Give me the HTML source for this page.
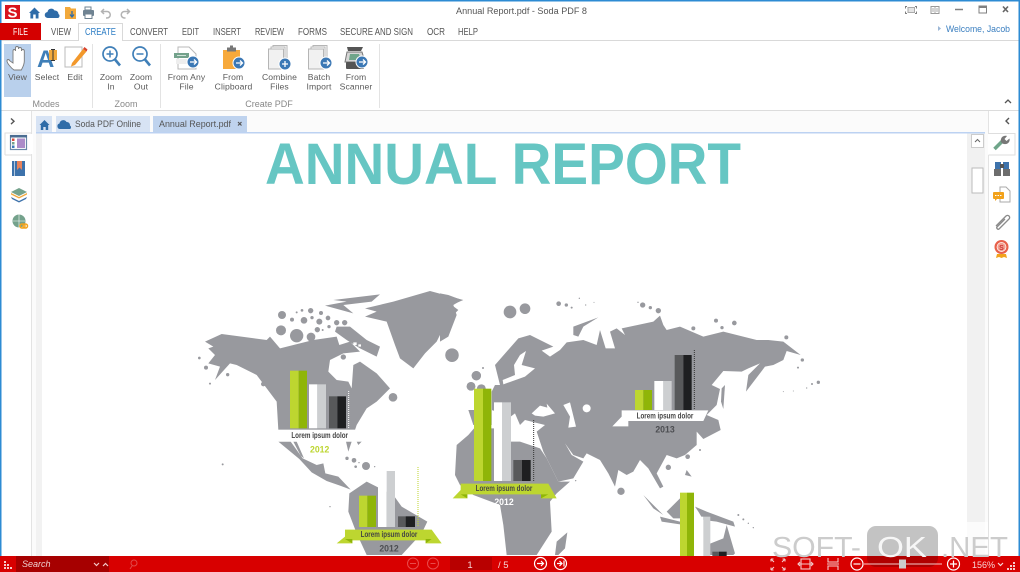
<!DOCTYPE html>
<html><head><meta charset="utf-8"><style>
html,body{margin:0;padding:0;background:#fff;width:1020px;height:572px;overflow:hidden}
svg{display:block;font-family:"Liberation Sans",sans-serif;filter:blur(.35px)}
.t{font-size:8.6px;fill:#5a5a5a;text-anchor:middle;letter-spacing:.1px}
.m{font-size:10px;fill:#555}
.g{font-size:9px;fill:#888;text-anchor:middle}
.l{font-family:"Liberation Sans",sans-serif;font-weight:bold;font-size:25px;text-anchor:middle}
</style></head><body>
<svg width="1020" height="572" viewBox="0 0 1020 572" xmlns="http://www.w3.org/2000/svg">
<rect width="1020" height="572" fill="#fff"/>
<!-- document -->
<rect x="32" y="111" width="956" height="445" fill="#fbfbfb"/>
<rect x="36" y="133" width="6" height="423" fill="#f2f2f2"/>
<rect x="42" y="133" width="925" height="423" fill="#fff"/>
<rect x="967" y="133" width="18" height="423" fill="#f1f1f1"/>
<text x="265" y="184" font-size="58" font-weight="bold" fill="#66c6c3" textLength="476" lengthAdjust="spacingAndGlyphs">ANNUAL REPORT</text>

<!-- Map Americas -->
<g transform="translate(180,285) scale(.33333)" fill="#98999e">
<path d="M555 70L640 50 750 18 850 45 815 60 835 75 800 110 770 170 735 205 700 250 660 220 645 180 620 110 555 95 590 80Z"/>
<path d="M460 45L600 28 575 50 490 60 520 85 435 62 500 50Z"/>
<path d="M470 125L510 125 560 165 600 185 590 215 540 190 500 165 465 140Z"/>
<path d="M75 170L125 147 260 165 270 155 300 190 400 165 470 155 478 180 510 170 540 200 490 205 450 225 445 260 470 285 505 290 515 310 520 240 540 230 590 265 630 310 600 340 590 350 560 370 530 420 525 435 295 435 290 350 230 270 170 240 150 235 105 285 120 245 85 235 105 210 85 190 100 185Z"/>
<path d="M295 470L332 470 368 520 410 540 430 535 436 565 475 575 512 614 480 602 440 588 395 562 358 522Z"/>
<path d="M340 470L350 470 372 520 362 512ZM498 470L515 470 505 500ZM530 470L545 470 535 480Z"/>
<path d="M508 625L560 590 640 630 665 665 742 710 725 745 665 810 560 810 530 745 505 680Z"/>
<circle cx="306" cy="90" r="12"/><circle cx="303" cy="136" r="15"/><circle cx="350" cy="152" r="20"/><circle cx="393" cy="156" r="13"/><circle cx="372" cy="106" r="10"/><circle cx="392" cy="77" r="8"/><circle cx="418" cy="110" r="9"/><circle cx="336" cy="104" r="6"/><circle cx="350" cy="82" r="3"/><circle cx="366" cy="76" r="4"/><circle cx="396" cy="98" r="5"/><circle cx="423" cy="84" r="6"/><circle cx="444" cy="99" r="7"/><circle cx="470" cy="113" r="8"/><circle cx="494" cy="113" r="8"/><circle cx="412" cy="134" r="8"/><circle cx="447" cy="125" r="5"/><circle cx="428" cy="135" r="3"/>
<circle cx="816" cy="210" r="20"/><circle cx="639" cy="337" r="13"/><circle cx="250" cy="297" r="7"/><circle cx="143" cy="269" r="5"/><circle cx="90" cy="296" r="3"/><circle cx="78" cy="248" r="6"/><circle cx="58" cy="219" r="4"/><circle cx="128" cy="538" r="3"/><circle cx="450" cy="665" r="2"/><circle cx="490" cy="216" r="8"/>
<circle cx="558" cy="543" r="12"/><circle cx="522" cy="526" r="7"/><circle cx="501" cy="520" r="5"/><circle cx="527" cy="545" r="4"/><circle cx="537" cy="533" r="2"/><circle cx="584" cy="545" r="2"/>
<circle cx="889" cy="272" r="14"/><circle cx="873" cy="304" r="13"/><circle cx="904" cy="311" r="13"/><circle cx="909" cy="249" r="3"/>
<path d="M520 172h10v8h-10zM535 178h8v7h-8z" fill="#fff"/>
</g>
<!-- Map Eurasia -->
<g transform="translate(440,285) scale(.33333)" fill="#98999e">
<path d="M0 25L25 30 65 45 40 60 50 90 25 155 0 170Z"/>
<path d="M165 300L180 300 165 240 235 160 270 150 300 165 340 185 305 197 330 215 360 195 380 172 430 165 470 180 480 135 497 190 525 190 510 140 530 130 555 150 545 130 640 110 660 92 670 120 680 135 720 125 790 155 850 140 950 165 985 165 1030 170 1082 210 1040 198 1030 225 1000 240 975 245 918 320 925 270 960 235 925 250 905 260 850 258 815 300 840 312 830 360 800 390 835 405 842 435 790 462 770 440 770 480 735 510 710 520 680 510 650 565 670 605 660 610 625 550 600 525 580 560 560 570 535 555 525 605 505 565 480 525 440 505 430 520 400 510 375 475 395 510 430 530 400 580 355 590 310 500 290 440 315 420 255 405 240 420 225 385 212 395 155 375 155 320Z"/>
<path d="M400 125L475 97 430 125 415 155 400 150Z"/>
<path d="M845 310L855 300 850 372 843 350Z"/>
<path d="M85 375H155V420H100Z"/>
<path d="M50 480L85 450 102 430H213V470H240L300 490 320 520 355 590 390 590 350 625 330 650 335 740 290 810 200 810 190 720 180 660 100 630 60 600 45 570Z"/>
<path d="M610 630L670 690 640 670ZM680 680L720 640 735 645 730 700 700 700ZM660 695L720 710 720 718 665 710ZM765 665L800 680 880 710 885 725 830 710 790 705 775 680ZM740 555L755 575 735 570Z"/>
<path d="M350 770L382 742 375 790 355 810 345 810Z"/>
<path d="M860 720L885 805 880 810 790 810 800 780 850 760Z"/>
<circle cx="210" cy="81" r="19"/><circle cx="255" cy="71" r="16"/><circle cx="36" cy="211" r="20"/><circle cx="109" cy="272" r="14"/><circle cx="93" cy="304" r="13"/><circle cx="124" cy="311" r="13"/>
<circle cx="356" cy="56" r="7"/><circle cx="379" cy="60" r="5"/><circle cx="395" cy="68" r="3"/><circle cx="418" cy="40" r="2"/><circle cx="437" cy="60" r="2"/><circle cx="462" cy="52" r="1.500"/>
<circle cx="608" cy="60" r="8"/><circle cx="631" cy="68" r="5"/><circle cx="655" cy="77" r="8"/><circle cx="594" cy="52" r="2"/><circle cx="760" cy="130" r="6"/><circle cx="828" cy="107" r="6"/><circle cx="883" cy="114" r="7"/><circle cx="846" cy="128" r="5"/>
<circle cx="1039" cy="157" r="6"/><circle cx="1087" cy="225" r="5"/><circle cx="1074" cy="248" r="3"/><circle cx="1135" cy="292" r="5"/><circle cx="1116" cy="297" r="3"/><circle cx="1100" cy="309" r="2"/><circle cx="1060" cy="318" r="1.500"/><circle cx="1030" cy="320" r="1.500"/>
<circle cx="743" cy="515" r="7"/><circle cx="685" cy="547" r="8"/><circle cx="543" cy="619" r="11"/><circle cx="780" cy="495" r="3"/><circle cx="407" cy="587" r="2"/><circle cx="895" cy="690" r="3"/><circle cx="910" cy="703" r="3"/><circle cx="925" cy="715" r="2"/><circle cx="940" cy="728" r="2"/>
<!-- inner seas -->
<path d="M275 385L300 362 322 368 320 356 345 385 310 395 285 392Z" fill="#fff"/>
<path d="M370 360L390 352 408 425 385 428 390 395Z" fill="#fff"/>
<circle cx="440" cy="370" r="12" fill="#fff"/>
<path d="M240 210L258 198 245 240 285 250 255 275 190 298 188 285 225 270 222 240Z" fill="#fff"/>
</g>
<!-- Chart layer Americas -->
<g transform="translate(180,285) scale(.33333)">
<rect x="292" y="434" width="250" height="36" fill="#fff"/>
<rect x="330" y="257" width="26" height="173" fill="#bdd630"/><rect x="356" y="257" width="25" height="173" fill="#8fb508"/>
<rect x="387" y="298" width="25" height="132" fill="#fff"/><rect x="412" y="298" width="26" height="132" fill="#cdcfd1"/>
<rect x="447" y="334" width="25" height="96" fill="#58595b"/><rect x="472" y="334" width="26" height="96" fill="#1e1f21"/>
<line x1="506" y1="318" x2="506" y2="430" stroke="#fff" stroke-width="3" stroke-dasharray="3 3"/>
<text x="419" y="459" class="l" fill="#444" textLength="170" lengthAdjust="spacingAndGlyphs">Lorem ipsum dolor</text>
<text x="419" y="503" class="l" style="font-size:28px" fill="#bdd630" textLength="58" lengthAdjust="spacingAndGlyphs">2012</text>
<rect x="537" y="632" width="25" height="94" fill="#bdd630"/><rect x="562" y="632" width="26" height="94" fill="#8fb508"/>
<rect x="594" y="558" width="26" height="168" fill="#fff"/><rect x="620" y="558" width="25" height="168" fill="#cdcfd1"/>
<rect x="654" y="694" width="23" height="32" fill="#58595b"/><rect x="677" y="694" width="28" height="32" fill="#1e1f21"/>
<line x1="714" y1="546" x2="714" y2="726" stroke="#bdd630" stroke-width="3" stroke-dasharray="3 3"/>
<path d="M495 734H755L785 775H737V766H517V775H470L495 755Z" fill="#bdd630"/>
<path d="M495 762H517V775ZM755 762H737V775Z" fill="#8fb508"/>
<text x="627" y="756" class="l" fill="#444" textLength="170" lengthAdjust="spacingAndGlyphs">Lorem ipsum dolor</text>
<text x="627" y="800" class="l" style="font-size:27px" fill="#4d4e52" textLength="58" lengthAdjust="spacingAndGlyphs">2012</text>
</g>
<!-- Chart layer EMEA/Asia -->
<g transform="translate(440,285) scale(.33333)">
<rect x="102" y="311" width="27" height="277" fill="#bdd630"/><rect x="129" y="311" width="25" height="277" fill="#8fb508"/>
<rect x="162" y="352" width="24" height="236" fill="#fff"/><rect x="186" y="352" width="27" height="236" fill="#cdcfd1"/>
<rect x="220" y="525" width="26" height="63" fill="#58595b"/><rect x="246" y="525" width="26" height="63" fill="#1e1f21"/>
<line x1="281" y1="405" x2="281" y2="588" stroke="#333" stroke-width="3" stroke-dasharray="3 3"/>
<path d="M62 596H325L350 640H303V628H82V640H38L62 615Z" fill="#bdd630"/>
<path d="M62 628H82V640ZM325 628H303V640Z" fill="#8fb508"/>
<text x="192" y="618" class="l" fill="#444" textLength="170" lengthAdjust="spacingAndGlyphs">Lorem ipsum dolor</text>
<text x="192" y="660" class="l" style="font-size:27px" fill="#fff" textLength="58" lengthAdjust="spacingAndGlyphs">2012</text>
<rect x="585" y="315" width="25" height="60" fill="#bdd630"/><rect x="610" y="315" width="26" height="60" fill="#8fb508"/>
<rect x="643" y="288" width="27" height="87" fill="#fff"/><rect x="670" y="288" width="25" height="87" fill="#cdcfd1"/>
<rect x="704" y="210" width="26" height="165" fill="#58595b"/><rect x="730" y="210" width="25" height="165" fill="#1e1f21"/>
<line x1="763" y1="195" x2="763" y2="375" stroke="#333" stroke-width="3" stroke-dasharray="3 3"/>
<path d="M545 376H805L790 408H565L565 424H517L545 395Z" fill="#fff"/>
<text x="675" y="400" class="l" fill="#444" textLength="170" lengthAdjust="spacingAndGlyphs">Lorem ipsum dolor</text>
<text x="675" y="443" class="l" style="font-size:27px" fill="#4d4e52" textLength="58" lengthAdjust="spacingAndGlyphs">2013</text>
<rect x="720" y="623" width="21" height="190" fill="#bdd630"/><rect x="741" y="623" width="21" height="190" fill="#8fb508"/>
<rect x="768" y="695" width="22" height="120" fill="#fff"/><rect x="790" y="695" width="21" height="120" fill="#cdcfd1"/>
<rect x="817" y="800" width="20" height="15" fill="#58595b"/><rect x="837" y="800" width="23" height="15" fill="#1e1f21"/>
</g>

<!-- Scrollbar -->
<rect x="971.500" y="134.500" width="12" height="13" fill="#fff" stroke="#ccc"/>
<path d="M975 142l2.500-2.500 2.500 2.500" fill="none" stroke="#666"/>
<rect x="972" y="168" width="11" height="25" fill="#fff" stroke="#bbb"/>

<!-- Watermark backing -->
<rect x="760" y="522" width="260" height="34" fill="#fff" opacity=".72"/>
<path d="M867 556V535a9 9 0 0 1 9-9H929a9 9 0 0 1 9 9V556Z" fill="#888" opacity=".5"/>

<!-- Chrome top -->
<rect y="0" width="1020" height="111" fill="#fff"/>
<rect y="0" width="1020" height="1.500" fill="#2d8bd3"/>
<rect y="40" width="1020" height="1" fill="#d9d9d9"/>
<rect y="110" width="1020" height="1" fill="#dcdcdc"/>
<rect x="0" y="0" width="1.500" height="572" fill="#2d8bd3"/><rect x="1018.500" y="0" width="1.500" height="572" fill="#2d8bd3"/>

<!-- Logo + QAT -->
<rect x="5" y="5" width="15" height="14" fill="#d8141c"/>
<text x="12.500" y="17.500" font-size="15" font-weight="bold" fill="#fff" text-anchor="middle">S</text>
<path d="M29 13l5.500-5.500 5.500 5.500-1.500 0v5.500h-2.800v-4h-2.500v4h-2.800v-5.500z" fill="#2f6ca8"/>
<path d="M48 18a3 3 0 0 1-.5-6 3.800 3.800 0 0 1 7-1.500 3.500 3.500 0 0 1 4 3.500 2.200 2.200 0 0 1-.5 4z" fill="#2f6ca8"/>
<path d="M65 7h5l1 1.500h5v10.500h-11z" fill="#f2a93b"/><path d="M72 11v5m-2-1.500l2 2.500 2-2.500" stroke="#2f6ca8" stroke-width="1.300" fill="none"/>
<path d="M85 7h6v3h-6z" fill="#fff" stroke="#6f8392"/><rect x="83" y="10" width="11" height="6" rx="1" fill="#6f8392"/><rect x="85" y="14" width="7" height="4.500" fill="#fff" stroke="#6f8392"/>
<path d="M104 9l-2.500 2.500 2.500 2.500M102 11.500h5a3.200 3.200 0 0 1 0 6.500h-1" fill="none" stroke="#b3b3b3" stroke-width="1.500"/>
<path d="M127 9l2.500 2.500-2.500 2.500M129 11.500h-4.500a3.200 3.200 0 0 0 0 6.500h1" fill="none" stroke="#b3b3b3" stroke-width="1.500"/>
<text x="456" y="14" font-size="9" fill="#555" textLength="131" lengthAdjust="spacingAndGlyphs">Annual Report.pdf  -  Soda PDF 8</text>

<!-- window controls -->
<g fill="none" stroke="#808080">
<path d="M907 6.500h-1.500v2M915 6.500h1.500v2M907 13.500h-1.500v-2M915 13.500h1.500v-2"/><rect x="908" y="7.500" width="6.500" height="5" fill="#e4e4e4" stroke="#aaa"/>
<rect x="931" y="6.500" width="8" height="7" stroke="#999"/><path d="M935 6.500v7M932 9h2M936 9h2M932 11h2M936 11h2" stroke="#aaa"/>
<path d="M955 9.500h8" stroke="#808080" stroke-width="1.500"/>
<rect x="979" y="6" width="7.500" height="7"/><path d="M979 7h7.500" stroke-width="2"/>
<path d="M1003 6.500l5 5.500M1008 6.500l-5 5.500" stroke="#666" stroke-width="1.600"/>
</g>
<path d="M938 26l3 2.500-3 2.500z" fill="#9cb7d6"/>
<text x="946" y="32" font-size="9.500" fill="#3b7fc0" textLength="64" lengthAdjust="spacingAndGlyphs">Welcome, Jacob</text>

<!-- Menu tabs -->
<rect x="0" y="23" width="41" height="17" fill="#d40000"/>
<text x="13" y="35" class="m" style="fill:#fff" textLength="15" lengthAdjust="spacingAndGlyphs">FILE</text>
<path d="M78.500 41V23.500H122.500V41" fill="#fff" stroke="#d9d9d9"/><rect x="79" y="40" width="43" height="1.500" fill="#fff"/>
<text x="51" y="35" class="m" textLength="20" lengthAdjust="spacingAndGlyphs">VIEW</text>
<text x="85" y="35" class="m" style="fill:#2b7cc4" textLength="31" lengthAdjust="spacingAndGlyphs">CREATE</text>
<text x="130" y="35" class="m" textLength="38" lengthAdjust="spacingAndGlyphs">CONVERT</text>
<text x="182" y="35" class="m" textLength="17" lengthAdjust="spacingAndGlyphs">EDIT</text>
<text x="213" y="35" class="m" textLength="28" lengthAdjust="spacingAndGlyphs">INSERT</text>
<text x="255" y="35" class="m" textLength="29" lengthAdjust="spacingAndGlyphs">REVIEW</text>
<text x="298" y="35" class="m" textLength="29" lengthAdjust="spacingAndGlyphs">FORMS</text>
<text x="340" y="35" class="m" textLength="73" lengthAdjust="spacingAndGlyphs">SECURE AND SIGN</text>
<text x="427" y="35" class="m" textLength="18" lengthAdjust="spacingAndGlyphs">OCR</text>
<text x="458" y="35" class="m" textLength="20" lengthAdjust="spacingAndGlyphs">HELP</text>

<!-- Ribbon -->
<rect x="4" y="44" width="27" height="53" fill="#b9d0ec"/>
<g stroke="#e3e3e3"><path d="M92.500 44V108M160.500 44V108M379.500 44V108"/></g>
<path d="M14 70c-3-2-7-7-7-9 0-2 2-2 3 0l3 2V51c0-2 2.500-2 2.500 0v-3c0-2 3-2 3 0v1c0-2 3-2 3 0v2c0-2 2.800-2 2.800 0v10c0 4-2 7-3 9z" fill="#fff" stroke="#7b7b7b" stroke-width=".9"/>

<text x="37" y="67" font-size="24" fill="#3f7fb8" font-weight="bold">A</text>
<rect x="49" y="50" width="8" height="10" fill="#f2a93b"/><path d="M51 49.500h4M53 49.500v11M51 60.500h4" stroke="#333" fill="none"/>
<path d="M65 47h17v20H65z" fill="#fff" stroke="#bbb"/><path d="M72 63l11-14 3.500 2.500L75 65l-4 1.500z" fill="#f2982b"/><path d="M83 49l1.500-2 3 2.500-1 2z" fill="#d9422b"/>

<circle cx="110" cy="54" r="7" fill="#fff" stroke="#3f7fb8" stroke-width="1.700"/><path d="M106.500 54h7M110 50.500v7" stroke="#3f7fb8" stroke-width="1.500"/><path d="M115 59.500l5 6" stroke="#3f7fb8" stroke-width="2.600"/>
<circle cx="140" cy="54" r="7" fill="#fff" stroke="#3f7fb8" stroke-width="1.700"/><path d="M136.500 54h7" stroke="#3f7fb8" stroke-width="1.500"/><path d="M145 59.500l5 6" stroke="#3f7fb8" stroke-width="2.600"/>

<!-- file icons -->
<path d="M178 47h11l7 7v15h-18z" fill="#fff" stroke="#b9b9b9"/><rect x="174" y="53" width="15" height="5" fill="#74a28c"/><rect x="177" y="55" width="9" height="1" fill="#cfe3d8"/><path d="M176 59h13v5h-13z" fill="#eee"/>
<rect x="223" y="50" width="17" height="19" fill="#f7a93b"/><rect x="227" y="47.500" width="9" height="4" fill="#777"/><rect x="230" y="45.500" width="3" height="3" fill="#777"/>
<g fill="#fff" stroke="#b5b5b5"><rect x="273" y="45.500" width="14" height="19"/><rect x="271" y="47" width="14" height="19"/><rect x="268.500" y="49" width="15" height="20" fill="#f1f1f1"/><rect x="313" y="45.500" width="14" height="19"/><rect x="311" y="47" width="14" height="19"/><rect x="308.500" y="49" width="15" height="20" fill="#f1f1f1"/></g>
<path d="M347 47h16l-2 4h-13z" fill="#555"/><path d="M347 52h15l3 10h-20z" fill="#d6d6d6" stroke="#777"/><path d="M350 54h9l2 6h-12z" fill="#6fa58a"/><rect x="346" y="62" width="18" height="7" rx="1" fill="#555"/>
<g fill="#3b78b5" stroke="#fff"><circle cx="193" cy="62" r="6"/><circle cx="239" cy="63" r="6"/><circle cx="285" cy="64" r="6"/><circle cx="326" cy="63" r="6"/><circle cx="362" cy="62" r="6"/></g>
<g fill="none" stroke="#fff" stroke-width="1.300"><path d="M190 62h6M194 59.500l2.500 2.500-2.500 2.500M236 63h6M240 60.500l2.500 2.500-2.500 2.500M282 64h6M285 61v6M323 63h6M327 60.500l2.500 2.500-2.500 2.500M359 62h6M363 59.500l2.500 2.500-2.500 2.500"/></g>

<!-- Labels -->
<text x="17.500" y="80" class="t">View</text><text x="47" y="80" class="t">Select</text><text x="75" y="80" class="t">Edit</text>
<text x="111" y="80" class="t">Zoom</text><text x="111" y="89.500" class="t">In</text><text x="141" y="80" class="t">Zoom</text><text x="141" y="89.500" class="t">Out</text>
<text x="186.500" y="80" class="t">From Any</text><text x="186.500" y="89.500" class="t">File</text>
<text x="233" y="80" class="t">From</text><text x="233.500" y="89.500" class="t">Clipboard</text>
<text x="279.500" y="80" class="t">Combine</text><text x="279.500" y="89.500" class="t">Files</text>
<text x="319" y="80" class="t">Batch</text><text x="319" y="89.500" class="t">Import</text>
<text x="356" y="80" class="t">From</text><text x="356" y="89.500" class="t">Scanner</text>
<text x="46" y="107" class="g">Modes</text><text x="126" y="107" class="g">Zoom</text><text x="269" y="107" class="g">Create PDF</text>
<path d="M1005 103l3-3 3 3" fill="none" stroke="#555" stroke-width="1.300"/>

<!-- Left panel -->
<rect x="1.500" y="111" width="30" height="445" fill="#fff"/>
<path d="M31.500 111V556" stroke="#e3e3e3"/>
<path d="M11 118.500l3 2.800-3 2.800" fill="none" stroke="#555" stroke-width="1.400"/>
<path d="M5 155V133H31.500M5 155H31.500" fill="none" stroke="#dedede"/><rect x="30" y="134" width="3" height="20" fill="#fff"/>
<rect x="10.500" y="135.500" width="16" height="14" fill="#fff" stroke="#6a88a8" stroke-width="1.200"/><rect x="10" y="135" width="17" height="2.500" fill="#4b6d92"/>
<rect x="12" y="138.500" width="2.500" height="2.500" fill="#d94a3a"/><rect x="12" y="142" width="2.500" height="2.500" fill="#74a28c"/><rect x="12" y="145.500" width="2.500" height="2.500" fill="#3b78b5"/><rect x="17" y="138.500" width="8" height="9.500" fill="#ac8cc9"/>
<rect x="12" y="161" width="13" height="15" fill="#3d72ab"/><path d="M17 161h5v9l-2.500-2.500-2.500 2.500z" fill="#e8825a"/><path d="M14.500 161v15" stroke="#fff" stroke-opacity=".6"/>
<path d="M19 188l8 4-8 4-8-4z" fill="#74a28c"/><path d="M11 193l8 4 8-4 0 1.500-8 4-8-4z" fill="#f2a93b"/><path d="M11 197l8 4 8-4-1 2-7 3.500-7-3.500z" fill="#3d72ab"/>
<circle cx="19" cy="221" r="6.500" fill="#74a28c"/><path d="M13 221h12M19 214.500v13" stroke="#fff" stroke-width=".6"/>
<rect x="20" y="224" width="5" height="4" rx="2" fill="none" stroke="#f2a21b" stroke-width="1.500"/><rect x="23" y="224" width="4.500" height="4" rx="2" fill="none" stroke="#f2a21b" stroke-width="1.500"/>

<!-- Tabs -->
<rect x="36" y="116" width="16" height="16" fill="#d7e3f4"/>
<path d="M39.500 125l5-5 5 5h-1.300v5h-2.500v-3h-2.400v3h-2.500v-5z" fill="#2f6ca8"/>
<rect x="56" y="116" width="94" height="16" fill="#d7e3f4"/>
<path d="M60 129a2.800 2.800 0 0 1-.5-5.500 3.800 3.800 0 0 1 7-1.500 3.200 3.200 0 0 1 3.500 3.500 2 2 0 0 1 0 3.500z" fill="#2f6ca8"/>
<text x="75" y="127" font-size="9.500" fill="#555" textLength="66" lengthAdjust="spacingAndGlyphs">Soda PDF Online</text>
<rect x="153" y="116" width="94" height="16" fill="#bfd3ee"/>
<text x="159" y="127" font-size="9.500" fill="#555" textLength="72" lengthAdjust="spacingAndGlyphs">Annual Report.pdf</text>
<path d="M238 122l3.500 3.500M241.500 122l-3.500 3.500" stroke="#555" stroke-width="1.200"/>
<rect x="36" y="132" width="949" height="1.500" fill="#bcd2f2"/>

<!-- Right panel -->
<rect x="988" y="111" width="30.500" height="445" fill="#fff"/>
<path d="M988.500 111V134M988.500 155V556" stroke="#e3e3e3"/>
<path d="M1009 118l-3 3 3 3" fill="none" stroke="#555" stroke-width="1.400"/>
<path d="M988.500 133.500H1015V155H988.500" fill="#fff" stroke="#dedede"/>
<path d="M994.500 149l8-8" stroke="#6fa58a" stroke-width="3.500"/><path d="M1001 142c-1-4 2-7 6-6l-2.500 3 2 2 3-2.500c1 4-3 7-7 5z" fill="#777"/>
<rect x="995" y="162" width="6" height="7" fill="#3d72ab"/><rect x="1003" y="162" width="6" height="7" fill="#3d72ab"/><rect x="994" y="169" width="7" height="7" fill="#6d6d6d"/><rect x="1003" y="169" width="7" height="7" fill="#6d6d6d"/><rect x="1000" y="164" width="4" height="4" fill="#555"/>
<path d="M1000 187h6l4 4v11h-10z" fill="#fff" stroke="#aaa"/><rect x="993" y="192" width="11" height="7" rx="1" fill="#f2a21b"/><path d="M995 199v2l2-2z" fill="#f2a21b"/><path d="M995 195.500h7" stroke="#fff" stroke-dasharray="1.500 1"/>
<path d="M996 226l10-10c2-2 5 1 3 3l-10 10c-1 1-3-1-2-2l8-8" fill="none" stroke="#8b8b8b" stroke-width="1.300"/>
<circle cx="1001.500" cy="247" r="7" fill="#e8604a"/><circle cx="1001.500" cy="247" r="4.500" fill="#f2a090" stroke="#fff" stroke-width=".7"/><path d="M997 254l-1 4 3-1 2.500 1 2.500-1 3 1-1-4z" fill="#f2a21b"/>
<text x="1001.500" y="250" font-size="7" fill="#c33" text-anchor="middle" font-weight="bold">S</text>

<!-- Status bar -->
<rect y="556" width="1020" height="16" fill="#d80000"/>
<path d="M867 556H938V558a9 9 0 0 1-9 9H876a9 9 0 0 1-9-9Z" fill="#b00000"/>
<rect x="16" y="556" width="93" height="16" fill="#a60000"/>
<g fill="#f6c9c9"><rect x="4" y="561" width="2" height="2"/><rect x="4" y="564" width="2" height="2"/><rect x="4" y="567" width="2" height="2"/><rect x="7" y="564" width="2" height="2"/><rect x="7" y="567" width="2" height="2"/><rect x="10" y="567" width="2" height="2"/></g>
<text x="22" y="567" font-size="9" font-style="italic" fill="#eed0d0">Search</text>
<path d="M94 563l2.500 2.500 2.500-2.500" fill="none" stroke="#f3caca" stroke-width="1.200"/><path d="M103 566l2.500-2.500 2.500 2.500" fill="none" stroke="#f3caca" stroke-width="1.200"/>
<circle cx="134" cy="563" r="3" fill="none" stroke="#e04a4a"/><path d="M132 566l-2 3" stroke="#e04a4a"/>
<g fill="none" stroke="#e84a4a"><circle cx="413" cy="563.500" r="5.500"/><circle cx="433" cy="563.500" r="5.500"/><path d="M410 563.500h6M435.500 563.500h-5"/></g>
<rect x="450" y="557" width="42" height="13" fill="#b80000"/>
<text x="470" y="568" font-size="9.500" fill="#f5d5d5" text-anchor="middle">1</text>
<text x="498" y="568" font-size="9.500" fill="#f5d5d5">/ 5</text>
<g fill="none" stroke="#fff" stroke-width="1.200"><circle cx="540.500" cy="563.500" r="6"/><circle cx="560.500" cy="563.500" r="6"/><path d="M537 563.500h6.500M541 561l2.500 2.500-2.500 2.500M557 563.500h5M559.500 561l2.500 2.500-2.500 2.500M564 560.500v6"/></g>
<g fill="none" stroke="#f3caca" stroke-width="1.100">
<path d="M771 559l3 3M785 559l-3 3M771 570l3-3M785 570l-3-3M771 559h2.500M771 559v2.500M785 559h-2.500M785 559v2.500M771 570h2.500M771 570v-2.500M785 570h-2.500M785 570v-2.500"/>
<rect x="801" y="559" width="9" height="10"/><path d="M798 564h15M800 562l-2 2 2 2M811 562l2 2-2 2"/>
<path d="M828 558v4h10v-4M828 570v-4h10v4M827 564h12"/>
</g>
<g fill="none" stroke="#fff" stroke-width="1.200"><circle cx="857" cy="564" r="6"/><path d="M853.500 564h7"/><circle cx="953.500" cy="564" r="6"/><path d="M950 564h7M953.500 560.500v7"/></g>
<path d="M864 564h78" stroke="#f3caca"/>
<rect x="899" y="559.500" width="7" height="9" fill="#ccc"/>
<text x="972" y="568" font-size="9" fill="#f5d5d5">156%</text>
<path d="M998 563l2.500 2.500 2.500-2.500" fill="none" stroke="#f5d5d5" stroke-width="1.200"/>
<g fill="#f6c9c9"><rect x="1013" y="562" width="2" height="2"/><rect x="1013" y="565" width="2" height="2"/><rect x="1013" y="568" width="2" height="2"/><rect x="1010" y="565" width="2" height="2"/><rect x="1010" y="568" width="2" height="2"/><rect x="1007" y="568" width="2" height="2"/></g>

<!-- Watermark text on top -->
<text x="772" y="557" font-size="29" fill="#cccccc" textLength="89" lengthAdjust="spacingAndGlyphs">SOFT-</text>
<text x="877" y="557" font-size="29" fill="#f6f6f6" textLength="50" lengthAdjust="spacingAndGlyphs">OK</text>
<text x="941" y="557" font-size="29" fill="#cccccc" textLength="67" lengthAdjust="spacingAndGlyphs">.NET</text>
</svg>
</body></html>
